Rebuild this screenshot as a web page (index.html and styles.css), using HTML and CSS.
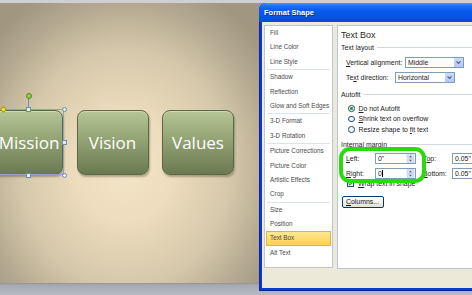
FILE: index.html
```html
<!DOCTYPE html>
<html>
<head>
<meta charset="utf-8">
<link rel="stylesheet" href="styles.css">
</head>
<body>
<div class="screen">
  <div class="topbar"></div>
  <div class="slide">
    <div class="shapes">
      <div class="shape mission">Mission
        <span class="frameSel"></span>
        <span class="rotline"></span>
        <span class="hd rot"></span>
        <span class="hd adj"></span>
        <span class="hd tm"></span>
        <span class="hd c tr"></span>
        <span class="hd rm"></span>
        <span class="hd c br"></span>
        <span class="hd bm"></span>
      </div>
      <div class="shape">Vision</div>
      <div class="shape">Values</div>
    </div>
  </div>
  <div class="bottombar"></div>

  <div class="dialog">
    <div class="titlebar">Format Shape</div>
    <div class="frame">
      <div class="nav">
        <div class="item">Fill</div>
        <div class="item">Line Color</div>
        <div class="item">Line Style</div>
        <div class="sep"></div>
        <div class="item">Shadow</div>
        <div class="item">Reflection</div>
        <div class="item">Glow and Soft Edges</div>
        <div class="sep"></div>
        <div class="item">3-D Format</div>
        <div class="item">3-D Rotation</div>
        <div class="sep"></div>
        <div class="item">Picture Corrections</div>
        <div class="item">Picture Color</div>
        <div class="item">Artistic Effects</div>
        <div class="item">Crop</div>
        <div class="sep"></div>
        <div class="item">Size</div>
        <div class="item">Position</div>
        <div class="item on">Text Box</div>
        <div class="item">Alt Text</div>
      </div>

      <div class="pane">
        <div class="h1">Text Box</div>
        <div class="sect s1">Text layout</div>
        <div class="row va">
          <span class="lbl wva"><u>V</u>ertical alignment:</span>
          <span class="combo cva">Middle<svg class="dd" viewBox="0 0 9 10"><path d="M2.3 3.8 4.5 6 6.7 3.8" fill="none" stroke="#4d6185" stroke-width="1.4"/></svg></span>
        </div>
        <div class="row td">
          <span class="lbl wtd">Te<u>x</u>t direction:</span>
          <span class="combo ctd">Horizontal<svg class="dd" viewBox="0 0 9 10"><path d="M2.3 3.8 4.5 6 6.7 3.8" fill="none" stroke="#4d6185" stroke-width="1.4"/></svg></span>
        </div>
        <div class="sect s2">Autofit</div>
        <div class="radios">
          <div class="opt"><span class="radio on"></span><span><u>D</u>o not Autofit</span></div>
          <div class="opt"><span class="radio"></span><span><u>S</u>hrink text on overflow</span></div>
          <div class="opt"><span class="radio"></span><span>Resize shape to <u>f</u>it text</span></div>
        </div>
        <div class="sect s3">Internal margin</div>
        <div class="mrow m1">
          <span class="lbl wm"><u>L</u>eft:</span>
          <span class="spin">0"<svg class="sp" viewBox="0 0 9 10"><rect x="0.5" y="0.5" width="8" height="4.2" rx="1" fill="#dbe5f8" stroke="#b3c3e4" stroke-width="0.6"/><rect x="0.5" y="5.3" width="8" height="4.2" rx="1" fill="#dbe5f8" stroke="#b3c3e4" stroke-width="0.6"/><path d="M2.8 3.5 4.5 1.8 6.2 3.5Z M2.8 6.5 4.5 8.2 6.2 6.5Z" fill="#4d6185"/></svg></span>
          <span class="lbl wm2">T<u>o</u>p:</span>
          <span class="spin wide">0.05"</span>
        </div>
        <div class="mrow m2">
          <span class="lbl wm"><u>R</u>ight:</span>
          <span class="spin">0<span class="caret"></span><svg class="sp" viewBox="0 0 9 10"><rect x="0.5" y="0.5" width="8" height="4.2" rx="1" fill="#dbe5f8" stroke="#b3c3e4" stroke-width="0.6"/><rect x="0.5" y="5.3" width="8" height="4.2" rx="1" fill="#dbe5f8" stroke="#b3c3e4" stroke-width="0.6"/><path d="M2.8 3.5 4.5 1.8 6.2 3.5Z M2.8 6.5 4.5 8.2 6.2 6.5Z" fill="#4d6185"/></svg></span>
          <span class="lbl wm2"><u>B</u>ottom:</span>
          <span class="spin wide">0.05"</span>
        </div>
        <div class="chk"><svg class="box" viewBox="0 0 7 7"><rect x="0.5" y="0.5" width="6" height="6" fill="#f4f4f0" stroke="#1c5180"/><path d="M1.6 3.4 2.9 4.8 5.4 2" fill="none" stroke="#21a121" stroke-width="1.2"/></svg><span><u>W</u>rap text in shape</span></div>
        <div class="btn"><u>C</u>olumns...</div>
        <div class="ring"></div>
      </div>
    </div>
  </div>
</div>
</body>
</html>
```

FILE: styles.css
```css
* { box-sizing: border-box; margin: 0; padding: 0; }
html, body { width: 472px; height: 295px; overflow: hidden; }
body { font-family: "Liberation Sans", Arial, sans-serif; background: #b0b4bc; }

.screen { position: relative; width: 472px; height: 295px; display: flex; flex-direction: column; overflow: hidden; }
.topbar { height: 3px; flex: none; background: #cfd0d2; }
.slide {
  height: 280px; flex: none; overflow: hidden;
  background: radial-gradient(ellipse 175px 195px at 125px 165px, #f5e5c8 0%, #eddcbd 28%, #d6c8ab 60%, #b4a990 84%, #a19780 100%);
}
.bottombar { flex: 1; background: linear-gradient(#8e929a 0, #a5a9b1 2px, #b7bbc3 100%); }

.shapes { display: flex; gap: 13.5px; margin: 107px 0 0 -9px; }
.shape {
  position: relative; flex: none; width: 72px; height: 65px; border-radius: 8px;
  border: 1px solid #5b6843;
  background: linear-gradient(#b6c595 0%, #97a777 40%, #6b7951 100%);
  box-shadow: 1px 2px 2px rgba(60, 50, 30, .35), inset 0 1px 0 rgba(255, 255, 255, .35);
  display: flex; align-items: center; justify-content: center;
  color: #fff; font-family: "Open Sans", sans-serif; font-size: 17px;
}
.mission { padding-left: 4px; }
.frameSel { position: absolute; left: -3px; top: -2px; right: -2px; bottom: -1px; border: 1px solid #8ea4c0; border-radius: 2px; }
.hd { position: absolute; width: 5px; height: 5px; background: #e3ecf7; border: 1px solid #6f8db2; }
.hd.c { border-radius: 50%; }
.tm { left: 33.5px; top: -4.5px; }
.tr { left: 69.5px; top: -4.5px; }
.rm { left: 69.5px; top: 28.5px; }
.br { left: 69.5px; top: 61.5px; }
.bm { left: 33.5px; top: 61.5px; }
.adj { left: 8.5px; top: -4.5px; background: #f6ee2a; border-color: #9a9420; transform: rotate(45deg); }
.rot { left: 33.5px; top: -18.5px; border-radius: 50%; background: #8bd33a; border-color: #4f8a1e; width: 6px; height: 6px; }
.rotline { position: absolute; left: 35.5px; top: -13px; width: 1px; height: 9px; background: #7a8ea8; }

.dialog {
  position: absolute; left: 259px; top: 3px; width: 230px; height: 288px;
  background: #0a3ad6; border-radius: 7px 7px 0 0;
  display: flex; flex-direction: column;
  box-shadow: inset 1px 0 0 #0a2396, inset 0 -1px 0 #0a2396;
}
.titlebar {
  height: 19px; flex: none; border-radius: 7px 7px 0 0;
  background: linear-gradient(#4796ff 0, #1a6ef6 3px, #075aeb 8px, #0455e6 13px, #0449d4 19px);
  color: #fff; font-weight: bold; font-size: 7.5px; padding-left: 5px;
  display: flex; align-items: center; text-shadow: 1px 1px 0 #0b2f9a;
}
.frame { flex: 1; margin: 0 0 3px 3px; background: #ece9d8; display: flex; gap: 4px; padding: 3px 0 0 2px; align-items: flex-start; }

.nav { width: 69px; height: 243px; flex: none; background: #fff; border: 1px solid #b9c6d4; font-size: 6.3px; color: #4a4a4a; }
.item { height: 14.4px; line-height: 14.4px; padding-left: 5px; white-space: nowrap; }
.item.on { margin: 0 1px; padding-left: 3px; line-height: 12.4px; background: linear-gradient(#fde890, #fbd254); border: 1px solid #e4b23e; }
.sep { height: 1px; background: #dde3ea; margin: 0 2px; }

.pane { position: relative; width: 200px; height: 244px; flex: none; background: #fff; border: 1px solid #b9c6d4; padding-left: 3px; font-size: 6.9px; color: #222; }
.h1 { font-size: 9px; height: 12px; line-height: 12px; margin-top: 3px; color: #2a2a2a; }
.sect { display: flex; align-items: center; height: 8px; color: #222; }
.sect::after { content: ""; flex: 1; height: 1px; background: #d2d8e0; margin-left: 3px; }
.s1 { margin-top: 2px; }
.s2 { margin-top: 7px; }
.s3 { margin-top: 6px; }

.row { display: flex; align-items: center; height: 11px; margin-left: 5px; }
.va { margin-top: 6px; }
.td { margin-top: 4px; }
.lbl { flex: none; white-space: nowrap; }
.wva { width: 59px; }
.wtd { width: 49px; }
.combo { position: relative; flex: none; height: 11px; border: 1px solid #7f9db9; background: #fff; padding-left: 2px; line-height: 9px; }
.cva { width: 59px; }
.ctd { width: 60px; }
.dd { position: absolute; right: 0; top: 0; width: 9px; height: 9px; background: linear-gradient(#cbdafc, #b4c8f6); border-radius: 1px; }

.radios { margin-top: 5px; }
.opt { height: 10.5px; display: flex; align-items: center; margin-left: 7px; gap: 4px; }
.radio { position: relative; width: 6.5px; height: 6.5px; border-radius: 50%; border: 1px solid #1c5180; background: #f4f4f0; flex: none; }
.radio.on::after { content: ""; position: absolute; left: 1px; top: 1px; width: 2.5px; height: 2.5px; border-radius: 50%; background: #2f9a2f; }

.mrow { display: flex; align-items: center; height: 11px; margin-left: 5px; }
.m1 { margin-top: 4px; }
.m2 { margin-top: 4px; }
.wm { width: 29px; }
.wm2 { width: 29px; margin-left: 7px; }
.spin { position: relative; flex: none; width: 41px; height: 11px; border: 1px solid #7f9db9; background: #fff; padding-left: 2px; line-height: 9px; display: flex; align-items: center; }
.spin.wide { width: 40px; }
.sp { position: absolute; right: 0; top: 0; width: 9px; height: 9px; }
.caret { width: 1px; height: 7px; background: #000; margin-left: 0.5px; }

.chk { display: flex; align-items: center; gap: 4px; height: 8px; margin: 1px 0 0 6px; }
.box { width: 7px; height: 7px; flex: none; }

.btn {
  width: 42px; height: 12px; margin: 8px 0 0 1px; border: 1px solid #003c74; border-radius: 2px;
  background: linear-gradient(#fff, #f1efe6 60%, #e3e0d3);
  line-height: 10px; padding-left: 3px; color: #111;
}

.ring { position: absolute; left: 1px; top: 121px; width: 87px; height: 36px; border: 4px solid #27dc08; border-radius: 11px; }
```
